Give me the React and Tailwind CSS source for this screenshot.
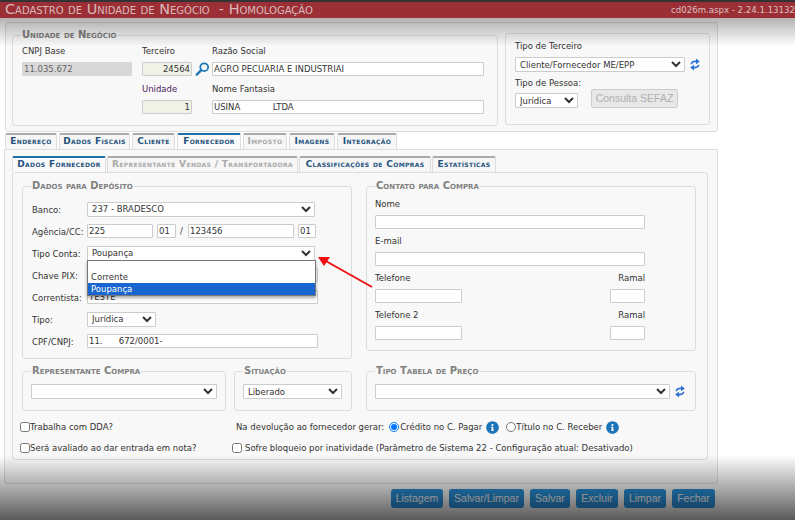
import { FaInfoCircle } from "react-icons/fa";

const inputCls = "block h-[14px] border px-[1px] text-[8.5px] leading-[12px] outline-none rounded-[1px]";
const whiteInput = `${inputCls} border-[#ccc] bg-white text-[#333]`;
const greenInput = `${inputCls} border-[#ccc] bg-[#f0f2e8] text-[#333] text-right`;
const selectCls = "block h-[15px] border border-[#ccc] bg-white text-[8.5px] text-[#333] outline-none rounded-[1px]";
const legendText = "px-[1px] h-[10px] text-[10px] leading-[10px] font-bold text-[#808080] [font-variant:small-caps]";
const legendCls = `-ml-[1px] ${legendText}`;
const legendCls8 = legendText;
const fieldsetCls = "border border-[#ddd] rounded-[3px] min-w-0";

const mainTabs = [
  { label: "Endereço", w: "w-[52px]" },
  { label: "Dados Fiscais", w: "w-[71px]" },
  { label: "Cliente", w: "w-[43px]" },
  { label: "Fornecedor", w: "w-[64px]", active: true },
  { label: "Imposto", w: "w-[44px]", disabled: true },
  { label: "Imagens", w: "w-[46px]" },
  { label: "Integração", w: "w-[60px]" },
];

const subTabs = [
  { label: "Dados Fornecedor", w: "w-[94px]", active: true },
  { label: "Representante Vendas / Transportadora", w: "w-[191px]", disabled: true },
  { label: "Classificações de Compras", w: "w-[132px]" },
  { label: "Estatísticas", w: "w-[64px]" },
];

const buttons = [
  { label: "Listagem", w: "w-[52px]" },
  { label: "Salvar/Limpar", w: "w-[75px]" },
  { label: "Salvar", w: "w-[40px]" },
  { label: "Excluir", w: "w-[42px]" },
  { label: "Limpar", w: "w-[42px]" },
  { label: "Fechar", w: "w-[43px]" },
];

function Tab({ label, w, active, disabled }) {
  return (
    <div
      className={`${w} h-[16px] shrink-0 whitespace-nowrap rounded-t-[2px] border-x border-[#ddd] border-t-2 text-center text-[9px] font-bold leading-[12px] tracking-[0.35px] [font-variant:small-caps] ${
        active ? "border-t-[#1f6fa8] bg-[#fafafa]" : "border-t-[#aaa] bg-[#f6f6f6]"
      } ${disabled ? "text-[#aaa]" : "text-[#24527e]"}`}
    >
      {label}
    </div>
  );
}

function Row({ label, children }) {
  return (
    <div className="flex h-[14px] items-center">
      <span className="w-[55px] shrink-0 pt-[2px]">{label}</span>
      {children}
    </div>
  );
}

function TopField({ label, children, purple }) {
  return (
    <div className="flex flex-col">
      <span className={`mb-[6px] h-[12px] leading-[14px] ${purple ? "text-[#4a2060]" : ""}`}>{label}</span>
      {children}
    </div>
  );
}

function Refresh() {
  return (
    <svg width="10" height="13" viewBox="0 0 10 13" className="shrink-0 text-[#2a6fd0]" fill="currentColor">
      <path d="M0.6 6.2C0.8 3.8 2.8 2.4 6 2.6V0.4L9.8 3.5L6 6.2V4.4C4 4.2 2.6 4.8 2 6.2Z" />
      <path d="M9.4 6.8C9.2 9.2 7.2 10.6 4 10.4V12.6L0.2 9.5L4 6.8V8.6C6 8.8 7.4 8.2 8 6.8Z" />
    </svg>
  );
}

function Lupa() {
  return (
    <svg width="15" height="14" viewBox="0 0 15 14" className="shrink-0 text-[#1f78b4]" fill="none" stroke="currentColor">
      <circle cx="9.2" cy="5.2" r="3.9" strokeWidth="1.8" />
      <line x1="6.2" y1="8.2" x2="1.8" y2="12.6" strokeWidth="2.4" strokeLinecap="round" />
    </svg>
  );
}

export default function App() {
  return (
    <div className="relative h-[520px] w-[795px] overflow-hidden bg-white font-['DejaVu_Sans',sans-serif] text-[8.5px] text-[#333]">
      {/* header */}
      <div className="flex h-[18px] items-center justify-between border-t-2 border-[#333] bg-[#9c2f35] pl-[5px]">
        <span className="whitespace-pre text-[14.4px] text-[#d9b9ba] [font-variant:small-caps]">Cadastro de Unidade de Negócio  - Homologação</span>
        <span className="text-[8.6px] text-[#dcc0c2]">cd026m.aspx - 2.24.1.13132</span>
      </div>

      {/* unidade de negocio */}
      <div className="ml-[5px] mt-[4px] flex h-[110px] w-[713px] gap-[7px] rounded-[3px] border border-[#ddd] bg-[#f8f8f8] pl-[6px] pt-[7px]">
        <fieldset className={`${fieldsetCls} h-[96px] w-[486px] pl-[9px] pt-[4px]`}>
          <legend className={legendCls}>Unidade de Negócio</legend>
          <div className="grid grid-cols-[120px_70px_272px] gap-y-[6px]">
            <TopField label="CNPJ Base">
              <input readOnly value="11.035.672" className={`${inputCls} w-[110px] border-[#d8d8d8] bg-[#d8d8d8] text-[#666]`} />
            </TopField>
            <TopField label="Terceiro">
              <div className="flex items-center gap-[3px]">
                <input readOnly value="24564" className={`${greenInput} w-[50px]`} />
                <Lupa />
              </div>
            </TopField>
            <TopField label="Razão Social">
              <input readOnly value="AGRO PECUARIA E INDUSTRIAI" className={`${whiteInput} w-[272px]`} />
            </TopField>
            <div />
            <TopField label="Unidade" purple>
              <input readOnly value="1" className={`${greenInput} w-[50px]`} />
            </TopField>
            <TopField label="Nome Fantasia">
              <input readOnly value="USINA            LTDA" className={`${whiteInput} w-[272px]`} />
            </TopField>
          </div>
        </fieldset>

        <div className="mt-[3px] h-[92px] w-[205px] rounded-[3px] border border-[#ddd] pl-[9px] pt-[6px]">
          <span className="block h-[12px] leading-[12px]">Tipo de Terceiro</span>
          <div className="mt-[5px] flex items-center gap-[5px]">
            <select defaultValue="a" className={`${selectCls} w-[170px]`}>
              <option value="a">Cliente/Fornecedor ME/EPP</option>
            </select>
            <Refresh />
          </div>
          <span className="mt-[5px] block h-[12px] leading-[12px]">Tipo de Pessoa:</span>
          <div className="flex items-end gap-[13px]">
            <select defaultValue="j" className={`${selectCls} w-[63px]`}>
              <option value="j">Jurídica</option>
            </select>
            <button className="h-[19px] w-[87px] rounded-[2px] border border-[#ccc] bg-[#e8e8e8] font-['Liberation_Sans',sans-serif] text-[10.5px] text-[#b0b0b0]">Consulta SEFAZ</button>
          </div>
        </div>
      </div>

      {/* abas principais */}
      <div className="relative ml-[4px] mt-[1px] h-[351px] w-[714px]">
        <div className="ml-[1px] flex gap-[2px]">
          {mainTabs.map((t) => (
            <Tab key={t.label} {...t} />
          ))}
        </div>
        <div className="h-[335px] rounded-b-[3px] border border-[#ddd] bg-[#f8f8f8] pl-[7px] pr-[8px] pt-[6px]">
          <div className="flex gap-[1px]">
            {subTabs.map((t) => (
              <Tab key={t.label} {...t} />
            ))}
          </div>
          <div className="h-[288px] w-[696px] rounded-[3px] border border-[#ddd] pl-[9px] pt-[8px]">
            <div className="flex items-start gap-[14px]">
              {/* coluna esquerda */}
              <div className="w-[330px]">
                <fieldset className={`${fieldsetCls} h-[178px] pl-[9px] pt-[11px]`}>
                  <legend className={legendCls}>Dados para Depósito</legend>
                  <div className="flex flex-col gap-[8px]">
                    <Row label="Banco:">
                      <select defaultValue="b" className={`${selectCls} w-[228px]`}>
                        <option value="b">237 - BRADESCO</option>
                      </select>
                    </Row>
                    <Row label="Agência/CC:">
                      <div className="flex items-center">
                        <input readOnly value="225" className={`${whiteInput} w-[66px]`} />
                        <input readOnly value="01" className={`${whiteInput} ml-[4px] w-[19px]`} />
                        <span className="mx-[4px] w-[4px]">/</span>
                        <input readOnly value="123456" className={`${whiteInput} w-[106px]`} />
                        <input readOnly value="01" className={`${whiteInput} ml-[4px] w-[18px]`} />
                      </div>
                    </Row>
                    <Row label="Tipo Conta:">
                      <div className="relative z-10">
                        <select defaultValue="p" className={`${selectCls} w-[228px]`}>
                          <option value="p">Poupança</option>
                        </select>
                        <div className="absolute left-0 top-[14px] w-[229px] border border-[#777] bg-white shadow-[0_2px_3px_rgba(0,0,0,0.35)]">
                          <div className="h-[11px]" />
                          <div className="h-[11px] pl-[3px] leading-[11px]">Corrente</div>
                          <div className="h-[12px] bg-[#1a66d0] pl-[3px] leading-[12px] text-white">Poupança</div>
                        </div>
                      </div>
                    </Row>
                    <Row label="Chave PIX:">
                      <input readOnly value="" className={`${whiteInput} w-[231px]`} />
                    </Row>
                    <Row label="Correntista:">
                      <input readOnly value="TESTE" className={`${whiteInput} w-[231px]`} />
                    </Row>
                    <Row label="Tipo:">
                      <select defaultValue="j" className={`${selectCls} w-[69px]`}>
                        <option value="j">Jurídica</option>
                      </select>
                    </Row>
                    <Row label="CPF/CNPJ:">
                      <input readOnly value="11.      672/0001-" className={`${whiteInput} w-[231px]`} />
                    </Row>
                  </div>
                </fieldset>
                <div className="mt-[7px] flex gap-[8px]">
                  <fieldset className={`${fieldsetCls} h-[45px] w-[204px] pl-[8px] pt-[8px]`}>
                    <legend className={legendCls8}>Representante Compra</legend>
                    <select className={`${selectCls} w-[186px]`}>
                      <option></option>
                    </select>
                  </fieldset>
                  <fieldset className={`${fieldsetCls} h-[45px] w-[118px] pl-[8px] pt-[8px]`}>
                    <legend className={legendCls8}>Situação</legend>
                    <select defaultValue="l" className={`${selectCls} w-[99px]`}>
                      <option value="l">Liberado</option>
                    </select>
                  </fieldset>
                </div>
              </div>

              {/* coluna direita */}
              <div className="w-[330px]">
                <fieldset className={`${fieldsetCls} h-[170px] pl-[8px] pt-[7px]`}>
                  <legend className={legendCls8}>Contato para Compra</legend>
                  <div className="flex w-[270px] flex-col gap-[6px]">
                    <div>
                      <span className="mb-[5px] block h-[12px] leading-[12px]">Nome</span>
                      <input readOnly className={`${whiteInput} w-[270px]`} />
                    </div>
                    <div>
                      <span className="mb-[5px] block h-[12px] leading-[12px]">E-mail</span>
                      <input readOnly className={`${whiteInput} w-[270px]`} />
                    </div>
                    <div>
                      <div className="mb-[5px] flex h-[12px] justify-between leading-[12px]">
                        <span>Telefone</span>
                        <span>Ramal</span>
                      </div>
                      <div className="flex justify-between">
                        <input readOnly className={`${whiteInput} w-[87px]`} />
                        <input readOnly className={`${whiteInput} w-[35px]`} />
                      </div>
                    </div>
                    <div>
                      <div className="mb-[5px] flex h-[12px] justify-between leading-[12px]">
                        <span>Telefone 2</span>
                        <span>Ramal</span>
                      </div>
                      <div className="flex justify-between">
                        <input readOnly className={`${whiteInput} w-[87px]`} />
                        <input readOnly className={`${whiteInput} w-[35px]`} />
                      </div>
                    </div>
                  </div>
                </fieldset>
                <fieldset className={`${fieldsetCls} mt-[15px] h-[45px] pl-[8px] pt-[8px]`}>
                  <legend className={legendCls8}>Tipo Tabela de Preço</legend>
                  <div className="flex items-center gap-[5px]">
                    <select className={`${selectCls} w-[295px]`}>
                      <option></option>
                    </select>
                    <Refresh />
                  </div>
                </fieldset>
              </div>
            </div>

            {/* opcoes */}
            <div className="-ml-[2px] mt-[10px] flex h-[12px] items-center">
              <label className="flex w-[216px] items-center">
                <input type="checkbox" className="m-0 h-[10px] w-[10px]" />
                <span>Trabalha com DDA?</span>
              </label>
              <span className="mr-[5px]">Na devolução ao fornecedor gerar:</span>
              <input type="radio" defaultChecked name="dev" className="m-0 h-[10px] w-[10px]" />
              <span className="ml-[1px]">Crédito no C. Pagar</span>
              <FaInfoCircle className="ml-[4px] h-[13px] w-[13px] text-[#1c75b8]" />
              <input type="radio" name="dev" className="m-0 ml-[7px] h-[10px] w-[10px]" />
              <span>Título no C. Receber</span>
              <FaInfoCircle className="ml-[4px] h-[13px] w-[13px] text-[#1c75b8]" />
            </div>
            <div className="-ml-[2px] mt-[9px] flex h-[12px] items-center">
              <label className="flex w-[212px] items-center">
                <input type="checkbox" className="m-0 h-[10px] w-[10px]" />
                <span>Será avaliado ao dar entrada em nota?</span>
              </label>
              <label className="flex items-center">
                <input type="checkbox" className="m-0 mr-[3px] h-[10px] w-[10px]" />
                <span>Sofre bloqueio por inatividade (Parâmetro de Sistema 22 - Configuração atual: Desativado)</span>
              </label>
            </div>
          </div>
        </div>
      </div>

      {/* botoes */}
      <div className="mt-[5px] flex w-[715px] justify-end gap-[6px]">
        {buttons.map((b) => (
          <button key={b.label} className={`${b.w} h-[19px] rounded-[3px] bg-[#2a94e0] font-['Liberation_Sans',sans-serif] text-[10.5px] text-white`}>
            {b.label}
          </button>
        ))}
      </div>

      {/* seta vermelha */}
      <svg className="pointer-events-none absolute left-[310px] top-[250px] z-20" width="70" height="45" viewBox="0 0 70 45">
        <line x1="62" y1="37" x2="14" y2="10" stroke="#f01010" strokeWidth="2" />
        <polygon points="8,7 20,7 14,16" fill="#f01010" />
      </svg>

      {/* sombra do topo e do rodape */}
      <div className="pointer-events-none absolute left-0 top-[18px] z-30 h-[28px] w-full bg-linear-to-b from-black/30 to-transparent" />
      <div className="pointer-events-none absolute left-0 top-[455px] z-30 h-[65px] w-full bg-linear-to-b from-transparent to-black/65" />
    </div>
  );
}
